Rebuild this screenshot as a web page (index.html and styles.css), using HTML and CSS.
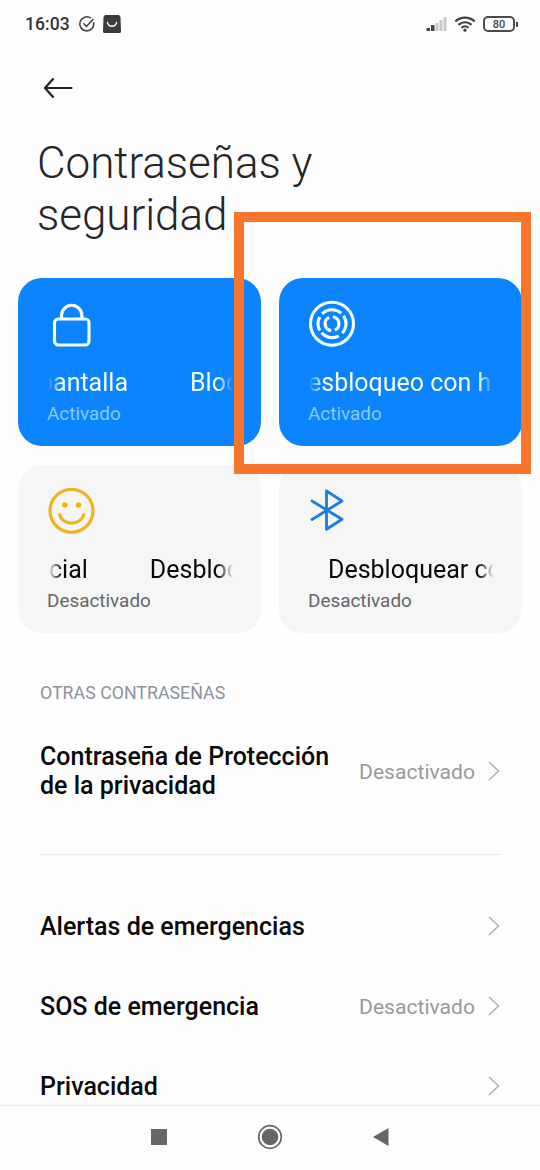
FILE: index.html
```html
<!DOCTYPE html>
<html lang="es">
<head>
<meta charset="utf-8">
<title>Contraseñas y seguridad</title>
<link rel="stylesheet" href="styles.css">
</head>
<body>
<div class="screen">
  <header class="status">
    <span class="clock">16:03</span>
    <svg class="check" width="18" height="18" viewBox="0 0 18 18" fill="none" stroke="#3c3c3c" stroke-width="1.5"><path d="M15.6 7.2A7 7 0 1 1 12.9 3.2"/><path d="M5.4 8.300l3 3.200L15.400 4"/></svg>
    <svg width="18" height="18" viewBox="0 0 18 18"><path d="M2 0h14l1.500 2 .5 14.500a1.500 1.500 0 0 1-1.500 1.500h-15A1.500 1.500 0 0 1 0 16.500L.5 2z" fill="#3b3b3b"/><path d="M4.500 7.500c1 5 8 5 9 0" fill="none" stroke="#fff" stroke-width="1.300" stroke-linecap="round"/></svg>
    <span class="spacer"></span>
    <svg class="signal" width="22" height="18" viewBox="0 0 22 18"><path d="M.5 13h3.500v3H.5zM5 10h3.500v6H5z" fill="#444"/><path d="M9.500 8h3v8h-3zM13.500 5h3v11h-3zM17.500 2h3v14h-3z" fill="#c9c9c9"/></svg>
    <svg class="wifi" width="22" height="18" viewBox="0 0 22 18" fill="none" stroke="#424242" stroke-width="2.200"><path d="M1.300 6.500a14 14 0 0 1 19.400 0M4.500 9.900a9.300 9.300 0 0 1 13 0M7.500 12.900a5 5 0 0 1 7 0"/><circle cx="11" cy="15.200" r="1.600" fill="#424242" stroke="none"/></svg>
    <span class="battery">80</span><span class="battery-tip"></span>
  </header>

  <div class="back">
    <svg width="30" height="22" viewBox="0 0 30 22" fill="none" stroke="#222" stroke-width="2.200" stroke-linecap="round" stroke-linejoin="round"><path d="M10 2L2 11l8 9M2 11h26.500"/></svg>
  </div>
  <h1 class="title">Contraseñas y<br>seguridad</h1>

  <main>
    <section class="tiles">
      <article class="tile tile-on">
        <svg class="tile-icon" viewBox="0 0 50 50" fill="none" stroke="#f4ffff" stroke-width="3.100"><rect x="8.500" y="20" width="34.500" height="26" rx="4"/><path d="M15.500 20v-3.500a10.200 10.200 0 0 1 20.400 0v3.500"/></svg>
        <div class="marquee"><span class="run run-lock">pantalla</span><span class="run next-lock">Bloq</span></div>
        <p class="state">Activado</p>
      </article>
      <article class="tile tile-on">
        <svg class="tile-icon" viewBox="0 0 50 50" fill="none" stroke="#f4ffff" stroke-width="3.100"><circle cx="25" cy="24.700" r="21.500"/><path d="M15.200 14.800A14 14 0 0 1 34.300 14.200M36.500 16.700A14 14 0 0 1 35.200 34.300M31.800 36.900A14 14 0 0 1 14.500 33.800M12.800 31.500A14 14 0 0 1 12.800 18.100"/><path d="M25.800 17.800A7 7 0 0 1 27.800 31.100M24.200 31.600A7 7 0 0 1 22.200 18.300"/></svg>
        <div class="marquee"><span class="run run-finger">esbloqueo con h</span></div>
        <p class="state">Activado</p>
      </article>
      <article class="tile">
        <svg class="tile-icon" viewBox="0 0 50 50" fill="none" stroke="#ebb721" stroke-width="3.200"><circle cx="25.500" cy="24.800" r="21.500"/><path d="M13.500 27.500c2 13 22 13 24.500 0"/><g fill="#ebb721" stroke="none"><circle cx="18.800" cy="19" r="2.800"/><circle cx="32.600" cy="19" r="2.800"/></g></svg>
        <div class="marquee"><span class="run run-face">cial</span><span class="run next-face">Desbloq</span></div>
        <p class="state">Desactivado</p>
      </article>
      <article class="tile">
        <svg class="tile-icon" viewBox="0 0 50 50" fill="none" stroke="#1b7edc" stroke-width="2.800" stroke-linecap="round" stroke-linejoin="round"><path d="M5 15L35 33.300 19.500 43.300V5L35 15 5 33.500"/></svg>
        <div class="marquee"><span class="run run-bt">Desbloquear co</span></div>
        <p class="state">Desactivado</p>
      </article>
    </section>

    <h2 class="section-label">OTRAS CONTRASEÑAS</h2>
    <div class="row row-tall"><span class="row-title">Contraseña de Protección<br>de la privacidad</span><span class="value">Desactivado</span><svg class="chevron" viewBox="0 0 12 20"><path d="M1 1l9.500 9L1 19"/></svg></div>
    <hr class="divider">
    <div class="row"><span class="row-title">Alertas de emergencias</span><svg class="chevron" viewBox="0 0 12 20"><path d="M1 1l9.500 9L1 19"/></svg></div>
    <div class="row"><span class="row-title">SOS de emergencia</span><span class="value">Desactivado</span><svg class="chevron" viewBox="0 0 12 20"><path d="M1 1l9.500 9L1 19"/></svg></div>
    <div class="row"><span class="row-title">Privacidad</span><svg class="chevron" viewBox="0 0 12 20"><path d="M1 1l9.500 9L1 19"/></svg></div>
  </main>

  <nav class="nav">
    <svg width="26" height="26" viewBox="0 0 26 26"><path d="M5 5h16v16H5z" fill="#666"/></svg>
    <svg width="26" height="26" viewBox="0 0 26 26"><circle cx="13" cy="13" r="11.300" fill="none" stroke="#666" stroke-width="1.700"/><circle cx="13" cy="13" r="8.300" fill="#666"/></svg>
    <svg width="26" height="26" viewBox="0 0 26 26"><path d="M5 13L20.500 4v18z" fill="#666"/></svg>
  </nav>
  <div class="highlight"></div>
</div>
</body>
</html>
```
FILE: styles.css
```css
* { box-sizing: border-box; margin: 0; padding: 0; }
body { background: #fefefe; font-family: Roboto, sans-serif; color: #090909; }
svg { display: block; flex: none; }

.screen {
  position: relative;
  display: flex;
  flex-direction: column;
  width: 540px;
  height: 1170px;
  overflow: hidden;
}

.status { display: flex; align-items: center; height: 48px; padding: 0 22px 0 25px; flex: none; }
.clock { width: 45px; font-size: 17.5px; font-weight: 500; letter-spacing: .1px; color: #333; line-height: 20px; }
.check { margin: 0 7px 0 8px; }
.spacer { flex: 1; }
.wifi { margin: 0 7px 0 6px; }
.battery {
  width: 32px;
  height: 16px;
  border: 2px solid #4a4a4a;
  border-radius: 5px;
  font-size: 11px;
  font-weight: 500;
  line-height: 13px;
  text-align: center;
  color: #444;
}
.battery-tip { width: 2px; height: 5px; margin-left: 1px; background: #4a4a4a; }

.back { display: flex; align-items: center; height: 80px; padding-left: 43px; flex: none; }
.title { height: 103px; margin: 10px 0 37px 37px; font-size: 44px; font-weight: 300; line-height: 51.5px; letter-spacing: -.05px; color: #262626; flex: none; }

.tiles { display: grid; grid-template-columns: 243px 243px; grid-auto-rows: 168px; gap: 19px 18px; padding: 0 18px; }
.tile { padding: 21px 28px 0; border-radius: 24px; background: #f6f6f6; }
.tile-on { background: #0d84ff; color: #f4ffff; }
.tile-icon { width: 50px; height: 50px; margin-bottom: 19px; }
.marquee {
  display: flex;
  height: 30px;
  overflow: hidden;
  font-size: 25px;
  line-height: 29px;
  white-space: nowrap;
  -webkit-mask-image: linear-gradient(90deg, transparent 2px, #000 16px, #000 calc(100% - 16px), transparent);
  mask-image: linear-gradient(90deg, transparent 2px, #000 16px, #000 calc(100% - 16px), transparent);
}
.run { flex: none; }
.run-lock { margin-left: -7px; }
.next-lock { margin-left: 62px; }
.run-finger { margin-left: 1px; }
.run-face { margin-left: 3px; }
.next-face { margin-left: 62px; }
.run-bt { margin-left: 21px; }
.state { margin: 5px 0 0 1px; font-size: 18.9px; line-height: 22px; color: #666; }
.tile-on .state { color: #86ccff; }

.section-label { margin: 49px 0 0 40px; height: 21px; font-size: 17.8px; font-weight: 400; line-height: 22px; color: #8d939d; }
.row { display: flex; align-items: center; height: 80px; padding: 0 40px; }
.row-tall { height: 136px; }
.row-title { flex: 1; font-size: 25px; font-weight: 500; line-height: 29px; }
.value { margin-right: 13px; font-size: 21.1px; color: #999; }
.chevron { width: 12px; height: 20px; fill: none; stroke: #b3b3b3; stroke-width: 1.6; }
.divider { height: 1px; margin: 15px 40px 31px; border: 0; background: #ebebeb; }

.nav {
  position: absolute;
  left: 0;
  right: 0;
  bottom: 0;
  display: flex;
  justify-content: center;
  align-items: center;
  gap: 85px;
  height: 65px;
  padding: 0 1px 3px 0;
  border-top: 1px solid #ececec;
  background: #fefefe;
}
.highlight { position: absolute; left: 234px; top: 212px; width: 297px; height: 262px; border: 10px solid #f8762c; }
```
